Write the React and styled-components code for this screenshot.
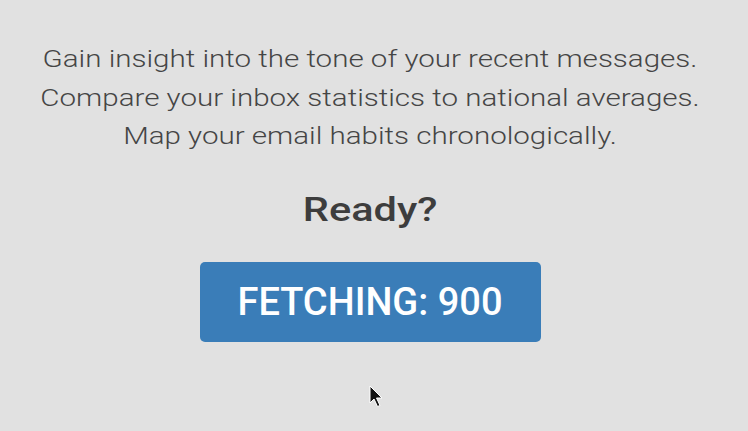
import React from 'react';
import styled, { createGlobalStyle } from 'styled-components';

const GlobalStyle = createGlobalStyle`
  html, body {
    margin: 0;
    padding: 0;
    background: #e1e1e1;
  }
  body {
    font-family: Roboto, "Liberation Sans", sans-serif;
    color: #444;
  }
`;

const Page = styled.div`
  position: relative;
  width: 748px;
  height: 431px;
  overflow: hidden;
  display: flex;
  flex-direction: column;
  align-items: center;
  padding: 40px 8px 0 0;
  box-sizing: border-box;
`;

// the source capture is stretched sideways, so text gets a scaleX
const Intro = styled.p`
  margin: 0;
  text-align: center;
  font-size: 24px;
  font-weight: 300;
  line-height: 38.5px;
  color: #454545;
  transform: scaleX(1.23);
`;

const Heading = styled.h2`
  margin: 33px 0 0;
  font-size: 34px;
  font-weight: 500;
  line-height: 40px;
  color: #3d3d3d;
  transform: scaleX(1.22);
`;

const FetchButton = styled.button`
  margin-top: 33px;
  width: 341px;
  height: 80px;
  border: none;
  border-radius: 5px;
  background: #3a7db8;
  color: #fff;
  font-family: inherit;
  font-size: 38px;
  font-weight: 500;
  cursor: pointer;
`;

const Cursor = styled.svg`
  position: absolute;
  left: 369px;
  top: 385px;
`;

export default function App() {
  return (
    <>
      <GlobalStyle />
      <Page>
        <Intro>
          Gain insight into the tone of your recent messages.
          <br />
          Compare your inbox statistics to national averages.
          <br />
          Map your email habits chronologically.
        </Intro>
        <Heading>Ready?</Heading>
        <FetchButton>FETCHING: 900</FetchButton>
        <Cursor width="17" height="26" viewBox="0 0 17 26">
          <path d="M1 1 L1 18 L5 14 L8.5 21.5 L11 20.5 L7.5 13 L13 13 Z" fill="#111" stroke="#fff" strokeWidth="1" />
        </Cursor>
      </Page>
    </>
  );
}
